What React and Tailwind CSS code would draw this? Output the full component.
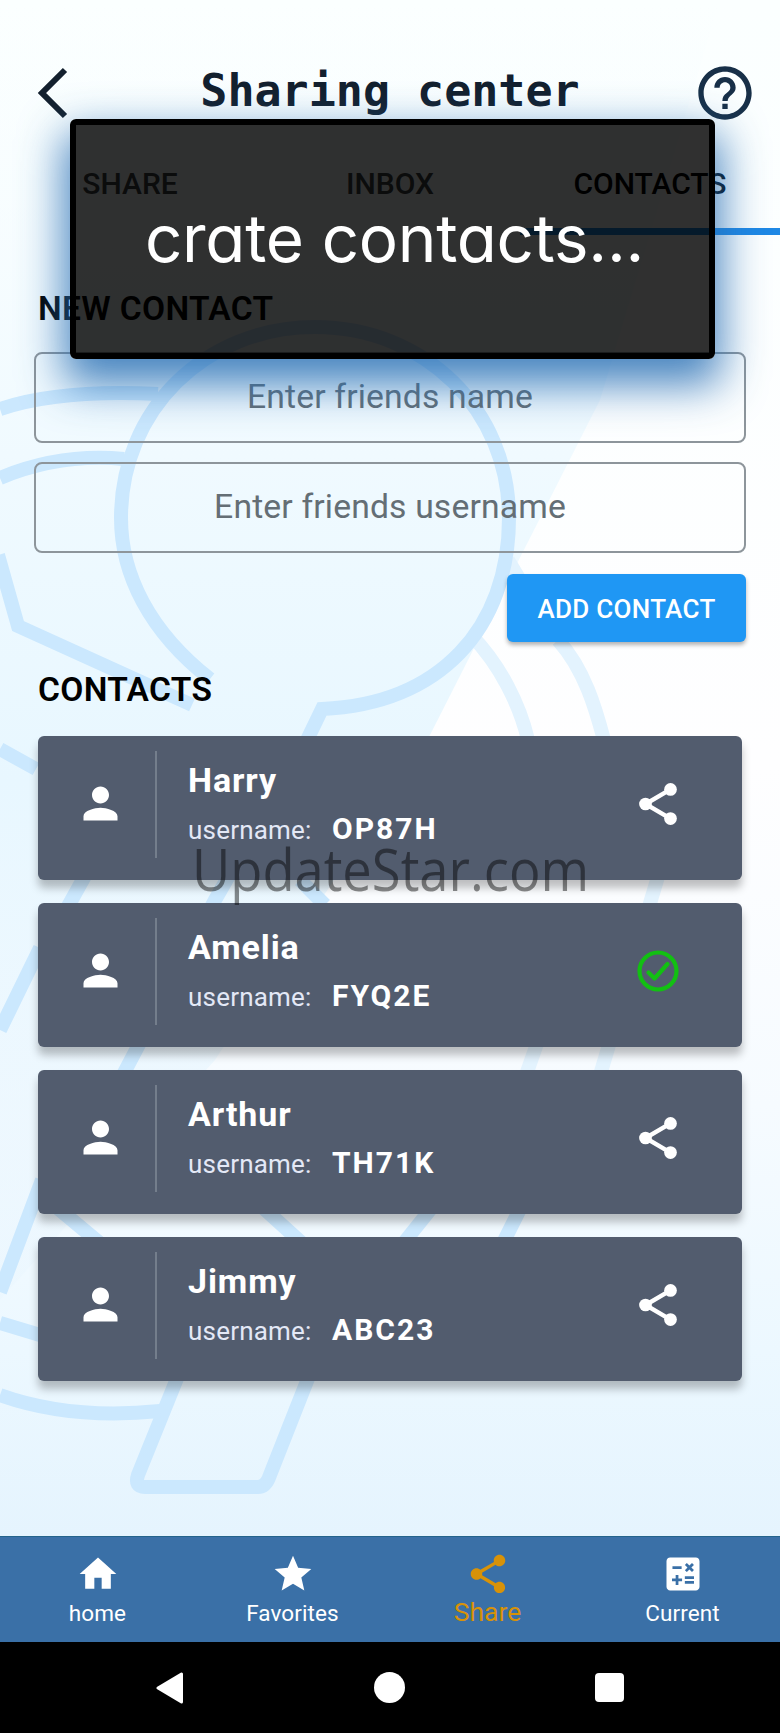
import { MdShare, MdPerson, MdHome, MdStar, MdCalculate, MdHelpOutline } from "react-icons/md";

const contacts = [
  { name: "Harry", user: "OP87H" },
  { name: "Amelia", user: "FYQ2E", done: true },
  { name: "Arthur", user: "TH71K" },
  { name: "Jimmy", user: "ABC23" },
];

function Backdrop() {
  return (
    <svg className="absolute inset-0 -z-10" width="780" height="1536" viewBox="0 0 780 1536" fill="none">
      <defs>
        <linearGradient id="base" x1="0" y1="0" x2="0" y2="1">
          <stop offset="0" stopColor="#fbffff" />
          <stop offset=".5" stopColor="#fefeff" />
          <stop offset=".72" stopColor="#f6fbff" />
          <stop offset=".88" stopColor="#ecf8ff" />
          <stop offset="1" stopColor="#e5f4fe" />
        </linearGradient>
        <linearGradient id="beam" x1="0" y1="0" x2="0" y2="1">
          <stop offset="0" stopColor="#f4fdff" stopOpacity="0" />
          <stop offset=".35" stopColor="#f0faff" />
          <stop offset=".6" stopColor="#e8f7ff" />
          <stop offset="1" stopColor="#eaf6fe" stopOpacity=".5" />
        </linearGradient>
      </defs>
      <path d="M0 0H780V1536H0Z" fill="url(#base)" />
      <path d="M0 0H720L600 400L430 735L215 1060L0 1300Z" fill="url(#beam)" />
      <g stroke="#e3f3fe" strokeWidth="14">
        <path d="M472 636C500 665 520 705 528 740M558 640C585 670 596 710 604 740M508 560L520 580" />
        <path d="M660 870L648 910M540 1035L526 1075M612 1035L600 1075" />
      </g>
      <g stroke="#cbe8fe" strokeWidth="14">
        <path d="M210 679C150 632 121 575 121 518C121 410 205 327 315 327C425 327 509 410 509 518C509 628 440 704 322 709L307 740L215 900L115 1090L106 1110" />
        <path d="M0 409Q60 389 158 394M0 478Q60 453 124 459" />
        <path d="M-2 555L18 626L192 705" />
        <path d="M0 749L36 769M86 874L66 910M300 880L325 905M40 948L0 1030M42 1180L0 1292" />
        <path d="M178 1330V1376L138 1475Q134 1487 145 1487H258Q266 1487 270 1475L309 1376" />
        <path d="M0 1323L40 1335M0 1395Q70 1420 160 1411M54 1205L102 1245M260 1205L304 1245M434 1205L402 1245M522 1205L502 1245" />
      </g>
    </svg>
  );
}

function ShareIcon() {
  return (
    <svg className="size-[50px]" viewBox="0 0 24 24" fill="#fff" stroke="#fff">
      <path d="M18 5L6 12L18 19" fill="none" strokeWidth="2.1" />
      <circle cx="18" cy="5" r="3.050" stroke="none" />
      <circle cx="6" cy="12" r="3.050" stroke="none" />
      <circle cx="18" cy="19" r="3.050" stroke="none" />
    </svg>
  );
}

function SentIcon() {
  return (
    <svg className="size-[50px]" viewBox="0 0 50 50" fill="none" stroke="#12c012">
      <circle cx="25" cy="25" r="18.500" strokeWidth="4.200" />
      <path d="M15.500 26.500L21.500 32.500L34.500 18" strokeWidth="4.200" strokeLinejoin="round" strokeLinecap="round" />
    </svg>
  );
}

function Field({ text }) {
  return (
    <div className="flex h-[91px] items-center justify-center rounded-lg border-2 border-[#8d959b] text-[33.7px] tracking-[0.15px] text-[#646e75]">
      {text}
    </div>
  );
}

function Contact({ name, user, done }) {
  return (
    <div className="flex h-36 items-center rounded-md bg-[#525c6e] shadow-[0_8px_8px_rgba(0,0,0,0.25)]">
      <div className="flex w-[117px] justify-center pl-[7px] pb-[9px]">
        <MdPerson className="size-[51px] text-white" />
      </div>
      <div className="mb-[8px] h-[107px] w-0.5 bg-[#747e8c]" />
      <div className="h-full flex-1 pl-[31px] pt-[22px]">
        <div className="text-[34px] leading-[44px] font-bold tracking-[0.9px] text-white">{name}</div>
        <div className="mt-[4px] flex items-baseline leading-[46px]">
          <span className="w-[144px] text-[26px] tracking-[0.2px] text-[#e3e8f6]">username:</span>
          <span className="text-[30px] font-bold tracking-[2px] text-white">{user}</span>
        </div>
      </div>
      <div className="mr-[59px] mb-[9px]">{done ? <SentIcon /> : <ShareIcon />}</div>
    </div>
  );
}

function NavItem({ Icon, label, active }) {
  return (
    <div className={active ? "flex flex-1 flex-col items-center pt-3.5 text-[#d89208]" : "flex flex-1 flex-col items-center pt-[15px] text-white"}>
      <Icon className={active ? "size-[46px]" : "size-[44px]"} />
      <span className={active ? "text-[26.5px] leading-[30px]" : "text-[22.5px] leading-[34px] tracking-[0.1px]"}>{label}</span>
    </div>
  );
}

export default function App() {
  return (
    <div className="relative isolate flex h-[1733px] w-[780px] flex-col overflow-hidden font-['Roboto',sans-serif]">
      <Backdrop />
      <header className="flex h-[150px] items-center justify-between pt-[36px] pr-[23px] pl-[37px]">
        <svg width="32" height="52" viewBox="0 0 32 52" fill="none" stroke="#13202e" strokeWidth="6">
          <path d="M28 3L5 26L28 49" />
        </svg>
        <h1 className="pb-1 pl-[18px] font-['DejaVu_Sans_Mono',monospace] text-[45px] font-bold text-[#13202e]">Sharing center</h1>
        <MdHelpOutline className="size-[64px] text-[#183048]" />
      </header>
      <nav className="grid h-[85px] grid-cols-3 text-center text-[30px] leading-[68px] font-medium text-[#3c4043]">
        <div>SHARE</div>
        <div>INBOX</div>
        <div className="border-b-[7px] border-[#1e88e5] text-black">CONTACTS</div>
      </nav>
      <main className="flex flex-1 flex-col pr-[34px] pl-[34px]">
        <h2 className="mt-[50px] pl-1 text-[33.5px] leading-[48px] font-semibold tracking-[0.35px] text-black">NEW CONTACT</h2>
        <div className="mt-[19px] flex flex-col gap-[19px]">
          <Field text="Enter friends name" />
          <Field text="Enter friends username" />
        </div>
        <button className="mt-[21px] h-[68px] w-[239px] self-end rounded-md bg-[#1f97f4] pt-0.5 text-[26px] font-medium tracking-[0.3px] text-white shadow-[0_3px_4px_rgba(0,0,0,0.3)]">ADD CONTACT</button>
        <h2 className="mt-[24px] pl-1 text-[33.5px] leading-[48px] font-semibold tracking-[0.35px] text-black">CONTACTS</h2>
        <div className="mt-[22px] flex flex-col gap-[23px] pr-1 pl-1">
          {contacts.map((c) => (
            <Contact key={c.user} {...c} />
          ))}
        </div>
      </main>
      <footer className="flex h-[106px] border-t border-[#24648c] bg-[#3a70a7]">
        <NavItem Icon={MdHome} label="home" />
        <NavItem Icon={MdStar} label="Favorites" />
        <NavItem Icon={MdShare} label="Share" active />
        <NavItem Icon={MdCalculate} label="Current" />
      </footer>
      <div className="flex h-[91px] items-center justify-around bg-black px-[61px]">
        <svg width="28" height="32" viewBox="0 0 28 32" fill="#fff" stroke="#fff" strokeWidth="3" strokeLinejoin="round"><path d="M2 16L25.500 2V30Z" /></svg>
        <div className="size-[31px] rounded-full bg-white" />
        <div className="size-[29px] rounded-sm bg-white" />
      </div>
      <div className="absolute top-[119px] left-[70px] flex h-[240px] w-[645px] items-center justify-center rounded-md border-[6px] border-black bg-black/81 shadow-[0_20px_44px_6px_rgba(40,110,180,0.85)]">
        <span className="pl-1 font-['Inter',sans-serif] text-[65.5px] tracking-[-0.3px] text-white [font-feature-settings:'cv11']">crate contacts...</span>
      </div>
      <div className="absolute top-[829px] left-[192px] origin-left scale-x-[0.905] font-['Open_Sans',sans-serif] text-[58px] leading-[80px] text-black/45">UpdateStar.com</div>
    </div>
  );
}
